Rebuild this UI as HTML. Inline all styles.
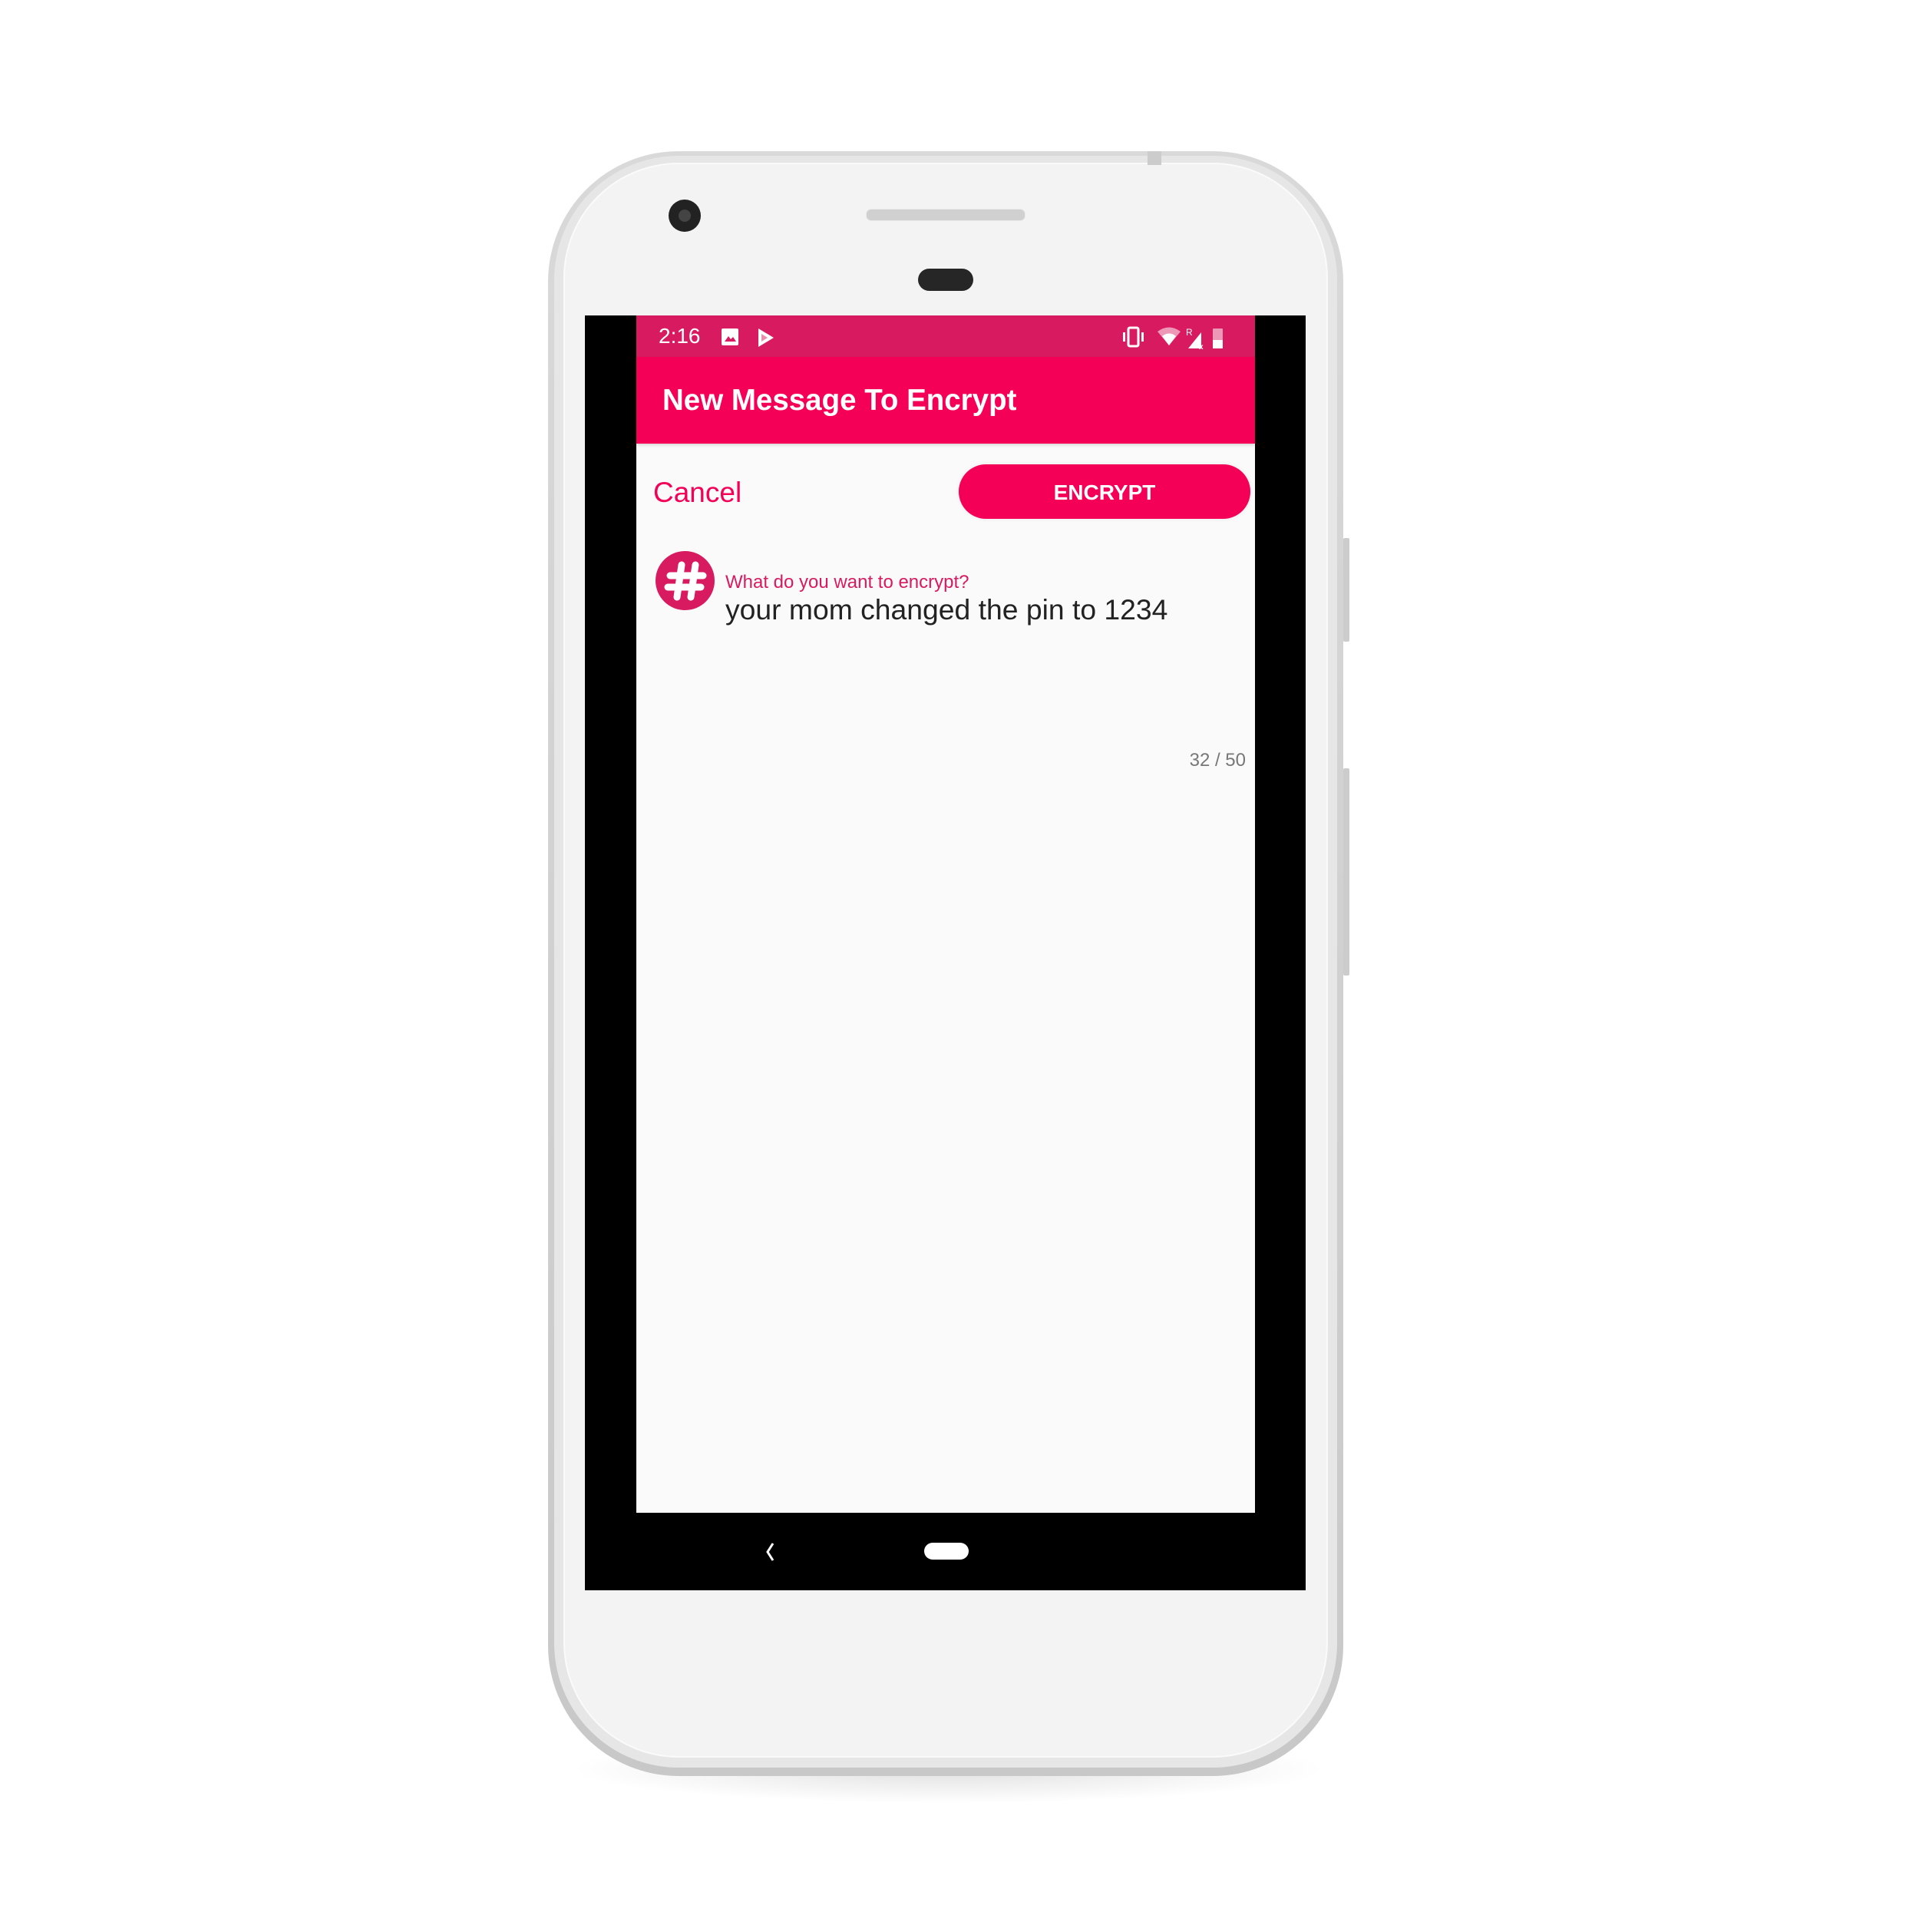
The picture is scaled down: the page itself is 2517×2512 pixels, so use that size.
<!DOCTYPE html>
<html><head><meta charset="utf-8"><style>
html,body{margin:0;padding:0;background:#fff;}
body{width:2517px;height:2512px;position:relative;overflow:hidden;font-family:"Liberation Sans",sans-serif;}
.abs{position:absolute;}
</style></head><body>
<div class="abs" style="left:740px;top:2260px;width:990px;height:90px;border-radius:50%;background:radial-gradient(ellipse at center,rgba(0,0,0,0.12),rgba(0,0,0,0) 70%);"></div>
<div class="abs" style="left:714px;top:197px;width:1036px;height:2117px;border-radius:170px;background:linear-gradient(#d9d9d9,#c8c8c8);"></div>
<div class="abs" style="left:722px;top:203px;width:1020px;height:2100px;border-radius:162px;background:#e6e6e6;"></div>
<div class="abs" style="left:734px;top:212px;width:996px;height:2078px;border-radius:150px;background:#f3f3f3;border:2px solid #fafafa;box-sizing:border-box;"></div>
<div class="abs" style="left:1750px;top:701px;width:8px;height:135px;background:#ccc;border-radius:2px;"></div>
<div class="abs" style="left:1750px;top:1001px;width:8px;height:270px;background:#ccc;border-radius:2px;"></div>
<div class="abs" style="left:1495px;top:197px;width:18px;height:18px;background:#ccc;"></div>
<div class="abs" style="left:871px;top:260px;width:42px;height:42px;border-radius:50%;background:#222;"></div>
<div class="abs" style="left:884px;top:273px;width:16px;height:16px;border-radius:50%;background:#444;"></div>
<div class="abs" style="left:1128px;top:272px;width:206px;height:14px;border-radius:7px;background:#d0d0d0;border:1px solid #e8e8e8;"></div>
<div class="abs" style="left:1196px;top:350px;width:72px;height:29px;border-radius:15px;background:#262626;"></div>
<div class="abs" style="left:762px;top:411px;width:939px;height:1661px;background:#000;"></div>
<div class="abs" style="left:829px;top:411px;width:806px;height:1560px;background:#fafafa;"></div>
<div class="abs" style="left:829px;top:411px;width:806px;height:54px;background:#D81B60;"></div>
<div class="abs" style="left:858px;top:420px;color:#fff;font-size:28px;line-height:36px;">2:16</div>
<div class="abs" style="left:940px;top:428px;width:22px;height:22px;background:#fff;border-radius:2px;"></div>
<svg class="abs" style="left:940px;top:428px" width="22" height="22"><path d="M4 17 L9 10 L12 14 L15 11 L19 17Z" fill="#D81B60"/></svg>
<svg class="abs" style="left:985px;top:427px" width="26" height="26"><path d="M3 1 L3 25 L23 13Z" fill="#fff"/><path d="M7 8 L7 18 L15 13Z" fill="#D81B60" opacity="0.5"/></svg>
<svg class="abs" style="left:1460px;top:424px" width="140" height="32" fill="#fff">
<rect x="10" y="3" width="13" height="24" rx="2" fill="none" stroke="#fff" stroke-width="3"/><rect x="3" y="9" width="3" height="12"/><rect x="27" y="9" width="3" height="12"/>
<path d="M48 8 Q63 -3 78 8 L63 26Z" opacity="0.55"/><path d="M54 14 Q63 7 72 14 L63 26Z"/>
<text x="85" y="13" font-size="12" font-family="Liberation Sans">R</text><path d="M88 30 L105 9 L105 30Z"/><text x="102" y="31" font-size="10" font-family="Liberation Sans" font-weight="bold">x</text>
<rect x="120" y="4" width="13" height="26" rx="1" opacity="0.55"/><rect x="120" y="19" width="13" height="11"/>
</svg>
<div class="abs" style="left:829px;top:465px;width:806px;height:113px;background:#F50057;box-shadow:0 2px 4px rgba(0,0,0,0.15);"></div>
<div class="abs" style="left:863px;top:498px;color:#fff;font-size:38.5px;font-weight:bold;line-height:48px;">New Message To Encrypt</div>
<div class="abs" style="left:851px;top:620px;color:#F50057;font-size:37px;line-height:44px;">Cancel</div>
<div class="abs" style="left:1249px;top:605px;width:380px;height:71px;border-radius:36px;background:#F50057;color:#fff;font-size:28px;font-weight:bold;line-height:73px;text-align:center;box-shadow:0 0 6px rgba(0,0,0,0.08);">ENCRYPT</div>
<div class="abs" style="left:854px;top:718px;width:77px;height:77px;border-radius:50%;background:#D81B60;"></div>
<svg class="abs" style="left:854px;top:718px" width="77" height="77"><g stroke="#fff" stroke-width="9" stroke-linecap="round"><line x1="34" y1="18" x2="28" y2="60"/><line x1="52" y1="18" x2="46" y2="60"/><line x1="19" y1="32" x2="62" y2="32"/><line x1="16" y1="47" x2="59" y2="47"/></g></svg>
<div class="abs" style="left:945px;top:745px;color:#D81B60;font-size:24px;line-height:28px;">What do you want to encrypt?</div>
<div class="abs" style="left:945px;top:772px;color:#222;font-size:37.3px;line-height:44px;">your mom changed the pin to 1234</div>
<div class="abs" style="left:1500px;top:977px;width:123px;text-align:right;color:#777;font-size:24px;line-height:28px;">32 / 50</div>
<svg class="abs" style="left:995px;top:2008px" width="20" height="28"><path d="M12 3 L5 14 L12 25" fill="none" stroke="#fff" stroke-width="3"/></svg>
<div class="abs" style="left:1204px;top:2010px;width:58px;height:22px;border-radius:11px;background:#fff;"></div>
</body></html>
